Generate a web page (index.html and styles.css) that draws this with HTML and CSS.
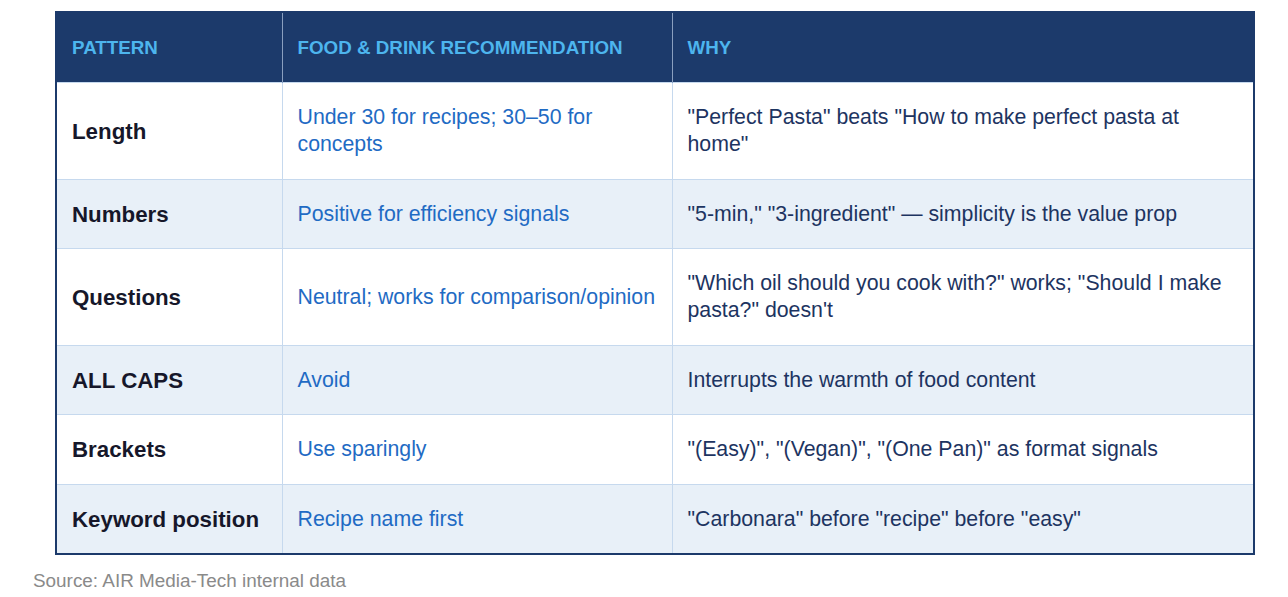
FILE: index.html
```html
<!DOCTYPE html>
<html lang="en">
<head>
<meta charset="utf-8">
<title>Food &amp; Drink title patterns</title>
<link rel="stylesheet" href="styles.css">
</head>
<body>
<div class="page">
  <table class="patterns">
    <colgroup>
      <col class="c1"><col class="c2"><col class="c3">
    </colgroup>
    <thead>
      <tr><th>PATTERN</th><th>FOOD &amp; DRINK RECOMMENDATION</th><th>WHY</th></tr>
    </thead>
    <tbody>
      <tr><td class="pat">Length</td><td class="rec">Under 30 for recipes; 30–50 for concepts</td><td class="why">"Perfect Pasta" beats "How to make perfect pasta at home"</td></tr>
      <tr class="alt"><td class="pat">Numbers</td><td class="rec">Positive for efficiency signals</td><td class="why">"5-min," "3-ingredient" — simplicity is the value prop</td></tr>
      <tr><td class="pat">Questions</td><td class="rec">Neutral; works for comparison/opinion</td><td class="why">"Which oil should you cook with?" works; "Should I make pasta?" doesn't</td></tr>
      <tr class="alt"><td class="pat">ALL CAPS</td><td class="rec">Avoid</td><td class="why">Interrupts the warmth of food content</td></tr>
      <tr><td class="pat">Brackets</td><td class="rec">Use sparingly</td><td class="why">"(Easy)", "(Vegan)", "(One Pan)" as format signals</td></tr>
      <tr class="alt"><td class="pat">Keyword position</td><td class="rec">Recipe name first</td><td class="why">"Carbonara" before "recipe" before "easy"</td></tr>
    </tbody>
  </table>
  <p class="source">Source: AIR Media-Tech internal data</p>
</div>
</body>
</html>
```

FILE: styles.css
```css
html, body {
  margin: 0;
  padding: 0;
  background: #ffffff;
}
.page {
  padding: 11px 33px 0 33px;
  font-family: "Liberation Sans", Arial, sans-serif;
}
.patterns {
  margin-left: 22px;
  width: 1200px;
  border-collapse: collapse;
  border: 2px solid #1c3a6b;
  table-layout: fixed;
}
.c1 { width: 226px; }
.c2 { width: 390px; }
.c3 { width: auto; }
.patterns th {
  background: #1c3a6b;
  color: #4db5ee;
  font-size: 18.8px;
  font-weight: bold;
  text-align: left;
  line-height: 27px;
  padding: 21px 15px 21px 15px;
  border-left: 1px solid #8a9fbf;
}
.patterns th:first-child { border-left: none; }
.patterns td {
  font-size: 21.3px;
  line-height: 27px;
  padding: 21px 15px 20.5px 15px;
  border-top: 1px solid #c6d9ee;
  border-left: 1px solid #c6d9ee;
  vertical-align: middle;
  background: #ffffff;
}
.patterns td:first-child { border-left: none; }
.patterns tr.alt td { background: #e8f0f8; }
.patterns td.pat {
  font-size: 22.3px;
  font-weight: bold;
  color: #16172a;
}
.rec { color: #1f6bc4; }
.why { color: #1d3461; }
.source {
  margin: 14px 0 0 0;
  font-size: 18.9px;
  line-height: 24px;
  color: #8a8a8a;
}
```
